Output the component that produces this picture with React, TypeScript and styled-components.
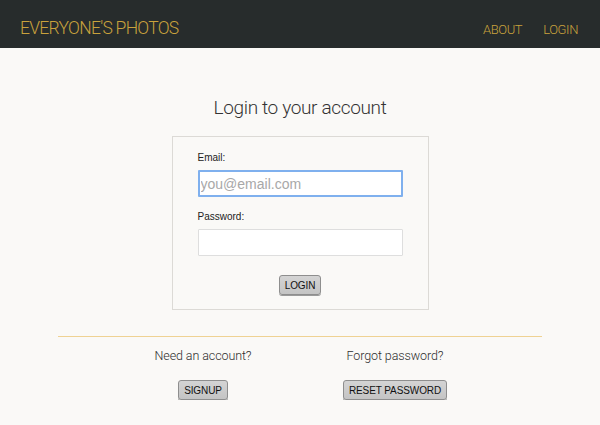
import React from "react";
import styled, { createGlobalStyle } from "styled-components";

const Global = createGlobalStyle`
  html, body { margin: 0; padding: 0; background: #faf9f7; }
  body { font-family: "Liberation Sans", Arial, sans-serif; color: #333; }
  * { box-sizing: border-box; }
`;

const Header = styled.header`
  height: 48px;
  background: #272c2c;
  display: flex;
  align-items: baseline;
  justify-content: space-between;
  padding: 18px 22px 0 20px;
`;

const Brand = styled.div`
  font-family: Roboto, sans-serif;
  font-weight: 300;
  font-size: 17.5px;
  line-height: 20px;
  color: #c9a23c;
  letter-spacing: -0.72px;
`;

const Nav = styled.nav`
  display: flex;
  align-items: baseline;
  gap: 21px;
`;

const NavLink = styled.a`
  font-family: Roboto, sans-serif;
  font-weight: 300;
  font-size: 13px;
  line-height: 20px;
  letter-spacing: -0.4px;
  color: #c9a23c;
  text-decoration: none;
`;

const Main = styled.main`
  display: flex;
  flex-direction: column;
  align-items: center;
  padding-top: 46px;
`;

const Title = styled.h1`
  margin: 0;
  font-family: Roboto, sans-serif;
  font-weight: 300;
  font-size: 19px;
  letter-spacing: -0.35px;
  color: #333;
  line-height: 28px;
`;

const Card = styled.form`
  margin-top: 14px;
  width: 257px;
  border: 1px solid #dcdad6;
  padding: 15px 25px 14px 25px;
  display: flex;
  flex-direction: column;
`;

const Label = styled.label`
  font-size: 10px;
  color: #222;
  line-height: 12px;
  margin-bottom: 6px;
`;

const Input = styled.input<{ $focused?: boolean }>`
  width: 205px;
  height: 27px;
  border: ${(p) => (p.$focused ? "2px solid #7fb0ee" : "1px solid #dedede")};
  border-radius: 1px;
  background: #fff;
  font-family: "Liberation Sans", Arial, sans-serif;
  font-size: 14px;
  padding: 0 ${(p) => (p.$focused ? "1px" : "2px")};
  outline: none;
  margin-bottom: ${(p) => (p.$focused ? "14px" : "19px")};
  &::placeholder { color: #a8a8a8; }
`;

const Button = styled.button`
  height: 20px;
  padding: 0 5px;
  font-family: "Liberation Sans", Arial, sans-serif;
  font-size: 10px;
  letter-spacing: -0.1px;
  color: #111;
  background: linear-gradient(#d4d4d4, #c4c4c4);
  border: 1px solid #8e8e8e;
  border-radius: 3px;
  box-shadow: 0 1px 0 #9a9a9a;
  cursor: pointer;
`;

const Center = styled.div`
  display: flex;
  justify-content: center;
`;

const Rule = styled.hr`
  width: 484px;
  border: 0;
  border-top: 1px solid #efd293;
  margin: 26px 0 0 0;
`;

const Bottom = styled.div`
  width: 384px;
  display: grid;
  grid-template-columns: 1fr 1fr;
  margin-top: 10px;
  transform: translateX(-1px);
`;

const Col = styled.div`
  display: flex;
  flex-direction: column;
  align-items: center;
  gap: 15px;
`;

const Prompt = styled.div`
  font-family: Roboto, sans-serif;
  font-weight: 300;
  font-size: 12.5px;
  letter-spacing: -0.1px;
  color: #2e2e2e;
  line-height: 18px;
`;

export default function App() {
  return (
    <>
      <Global />
      <Header>
        <Brand>EVERYONE'S PHOTOS</Brand>
        <Nav>
          <NavLink href="#">ABOUT</NavLink>
          <NavLink href="#">LOGIN</NavLink>
        </Nav>
      </Header>
      <Main>
        <Title>Login to your account</Title>
        <Card onSubmit={(e) => e.preventDefault()}>
          <Label>Email:</Label>
          <Input $focused placeholder="you@email.com" />
          <Label>Password:</Label>
          <Input type="password" />
          <Center>
            <Button type="button">LOGIN</Button>
          </Center>
        </Card>
        <Rule />
        <Bottom>
          <Col>
            <Prompt>Need an account?</Prompt>
            <Button type="button">SIGNUP</Button>
          </Col>
          <Col>
            <Prompt>Forgot password?</Prompt>
            <Button type="button">RESET PASSWORD</Button>
          </Col>
        </Bottom>
      </Main>
    </>
  );
}
